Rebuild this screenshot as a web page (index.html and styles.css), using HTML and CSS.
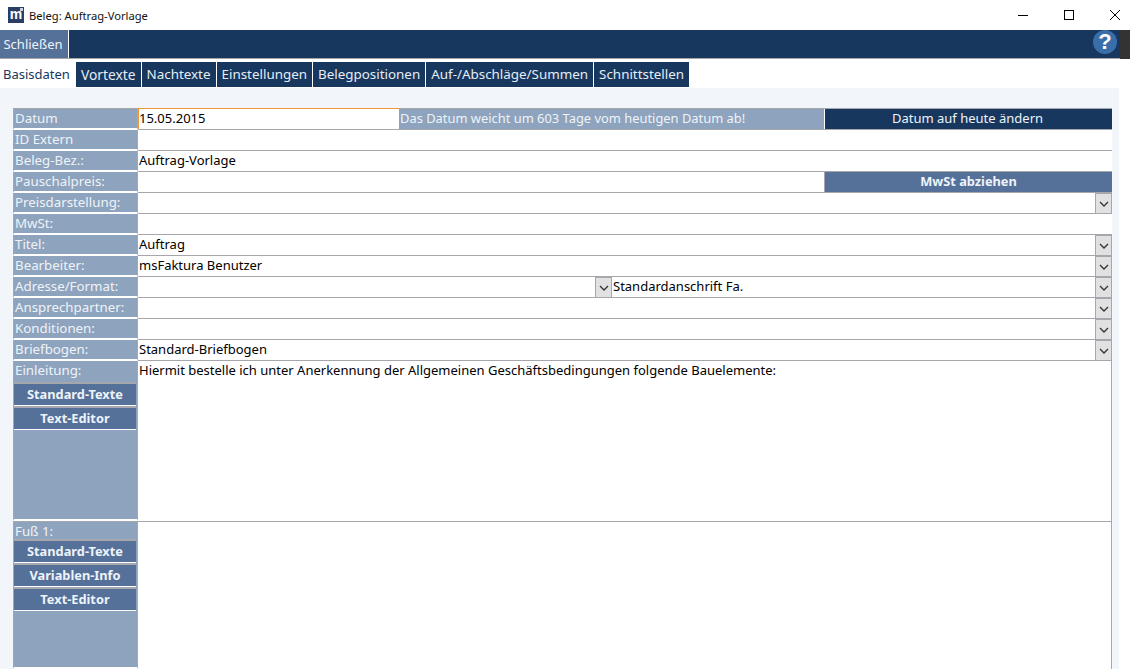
FILE: index.html
```html
<!DOCTYPE html>
<html lang="de">
<head>
  <meta charset="UTF-8" />
  <title>Beleg: Auftrag-Vorlage</title>
  <link rel="stylesheet" href="styles.css">
</head>
<body>
  <div class="titlebar">
    <div class="title">
      <div class="app-icon">m<span class="app-dot"></span></div>
      <span>Beleg: Auftrag-Vorlage</span>
    </div>
    <div class="win-btns">
      <svg width="12" height="12" viewBox="0 0 12 12"><path d="M1 6.5H11" stroke="#000" fill="none"/></svg>
      <svg width="12" height="12" viewBox="0 0 12 12"><rect x="1.5" y="1.5" width="9" height="9" stroke="#000" fill="none"/></svg>
      <svg width="12" height="12" viewBox="0 0 12 12"><path d="M1 1L11 11M11 1L1 11" stroke="#000" fill="none"/></svg>
    </div>
  </div>

  <div class="toolbar">
    <div class="toolbar-main">
      <button class="btn-close">Schließen</button>
      <div class="help">?</div>
    </div>
    <div class="toolbar-end"></div>
  </div>

  <div class="tabs">
    <a class="tab active">Basisdaten</a>
    <a class="tab tab-vortexte">Vortexte</a>
    <a class="tab">Nachtexte</a>
    <a class="tab">Einstellungen</a>
    <a class="tab">Belegpositionen</a>
    <a class="tab">Auf-/Abschläge/Summen</a>
    <a class="tab">Schnittstellen</a>
  </div>

  <div class="panel">
    <div class="form">
      <div class="row row-first">
        <div class="label">Datum</div>
        <div class="field field-date">15.05.2015</div>
        <div class="date-note">Das Datum weicht um 603 Tage vom heutigen Datum ab!</div>
        <button class="btn-today">Datum auf heute ändern</button>
      </div>
      <div class="row">
        <div class="label">ID Extern</div>
        <div class="field"></div>
      </div>
      <div class="row">
        <div class="label">Beleg-Bez.:</div>
        <div class="field">Auftrag-Vorlage</div>
      </div>
      <div class="row">
        <div class="label">Pauschalpreis:</div>
        <div class="field"></div>
        <button class="btn-mwst">MwSt abziehen</button>
      </div>
      <div class="row">
        <div class="label">Preisdarstellung:</div>
        <div class="field"></div>
        <div class="drop"><svg width="10" height="6" viewBox="0 0 10 6"><path d="M1 1L5 5L9 1" stroke="#333" stroke-width="1.3" fill="none"/></svg></div>
      </div>
      <div class="row">
        <div class="label">MwSt:</div>
        <div class="field"></div>
      </div>
      <div class="row">
        <div class="label">Titel:</div>
        <div class="field">Auftrag</div>
        <div class="drop"><svg width="10" height="6" viewBox="0 0 10 6"><path d="M1 1L5 5L9 1" stroke="#333" stroke-width="1.3" fill="none"/></svg></div>
      </div>
      <div class="row">
        <div class="label">Bearbeiter:</div>
        <div class="field">msFaktura Benutzer</div>
        <div class="drop"><svg width="10" height="6" viewBox="0 0 10 6"><path d="M1 1L5 5L9 1" stroke="#333" stroke-width="1.3" fill="none"/></svg></div>
      </div>
      <div class="row">
        <div class="label">Adresse/Format:</div>
        <div class="field field-addr"></div>
        <div class="drop"><svg width="10" height="6" viewBox="0 0 10 6"><path d="M1 1L5 5L9 1" stroke="#333" stroke-width="1.3" fill="none"/></svg></div>
        <div class="field">Standardanschrift Fa.</div>
        <div class="drop"><svg width="10" height="6" viewBox="0 0 10 6"><path d="M1 1L5 5L9 1" stroke="#333" stroke-width="1.3" fill="none"/></svg></div>
      </div>
      <div class="row">
        <div class="label">Ansprechpartner:</div>
        <div class="field"></div>
        <div class="drop"><svg width="10" height="6" viewBox="0 0 10 6"><path d="M1 1L5 5L9 1" stroke="#333" stroke-width="1.3" fill="none"/></svg></div>
      </div>
      <div class="row">
        <div class="label">Konditionen:</div>
        <div class="field"></div>
        <div class="drop"><svg width="10" height="6" viewBox="0 0 10 6"><path d="M1 1L5 5L9 1" stroke="#333" stroke-width="1.3" fill="none"/></svg></div>
      </div>
      <div class="row">
        <div class="label">Briefbogen:</div>
        <div class="field">Standard-Briefbogen</div>
        <div class="drop"><svg width="10" height="6" viewBox="0 0 10 6"><path d="M1 1L5 5L9 1" stroke="#333" stroke-width="1.3" fill="none"/></svg></div>
      </div>

      <div class="row row-text row-intro">
        <div class="label label-text">
          <div class="label-cap">Einleitung:</div>
          <button class="btn-side">Standard-Texte</button>
          <button class="btn-side">Text-Editor</button>
        </div>
        <div class="field field-text">Hiermit bestelle ich unter Anerkennung der Allgemeinen Geschäftsbedingungen folgende Bauelemente:</div>
      </div>
      <div class="row row-text row-foot">
        <div class="label label-text">
          <div class="label-cap">Fuß 1:</div>
          <button class="btn-side">Standard-Texte</button>
          <button class="btn-side">Variablen-Info</button>
          <button class="btn-side">Text-Editor</button>
        </div>
        <div class="field field-text"></div>
      </div>
    </div>
  </div>
</body>
</html>
```

FILE: styles.css
```css
html, body {
  height: 100%;
}
body {
  font-family: 'Noto Sans', 'Open Sans', sans-serif;
  font-size: 13px;
  margin: 0;
  padding: 0;
  background-color: white;
  overflow: hidden;
}
button {
  font-family: inherit;
  font-size: 13px;
  cursor: pointer;
}
.titlebar {
  display: flex;
  justify-content: space-between;
  align-items: center;
  height: 30px;
  background-color: white;
}
.title {
  display: flex;
  align-items: center;
  font-size: 11.2px;
  color: #111;
  padding-left: 8px;
}
.app-icon {
  position: relative;
  width: 16px;
  height: 16px;
  margin-right: 5px;
  background-color: #2b3f66;
  color: white;
  font-family: 'Liberation Sans', sans-serif;
  font-weight: bold;
  font-size: 14px;
  line-height: 15px;
  text-align: center;
}
.app-dot {
  position: absolute;
  top: 1px;
  right: 1px;
  width: 3px;
  height: 3px;
  background-color: #c9d2e0;
}
.win-btns {
  display: flex;
  gap: 34px;
  padding-right: 9px;
}
.toolbar {
  display: flex;
  height: 30px;
}
.toolbar-main {
  flex: 1;
  display: flex;
  justify-content: space-between;
  align-items: flex-start;
  background-color: #17375e;
  border-bottom: 1px solid #a6a6a6;
  height: 28px;
}
.toolbar-end {
  width: 10px;
  height: 29px;
  background-color: #333;
}
.btn-close {
  height: 28px;
  width: 69px;
  padding: 0 2px 0 0;
  border: none;
  border-right: 1px solid white;
  background-color: #557199;
  color: #eef3fa;
}
.help {
  width: 24px;
  height: 24px;
  margin: 0 3px 0 0;
  border-radius: 50%;
  background-color: #3a6ea8;
  color: white;
  font-family: 'Liberation Sans', sans-serif;
  font-weight: bold;
  font-size: 22px;
  line-height: 24px;
  text-align: center;
}
.tabs {
  display: flex;
  height: 26px;
  padding-top: 2px;
}
.tab {
  display: block;
  height: 25px;
  line-height: 25px;
  padding: 0 5px;
  margin-right: 1px;
  background-color: #17375e;
  color: #e6edf6;
  font-size: 13.4px;
}
.tab.active {
  background-color: white;
  color: #17375e;
  font-size: 13px;
  padding: 0 5px 0 3px;
}
.tab-vortexte {
  font-size: 13.8px;
}
.panel {
  width: 1119px;
  height: 581px;
  box-sizing: border-box;
  padding: 20px 7px 0 13px;
  background-color: #f2f5fa;
}
.form {
  display: flex;
  flex-direction: column;
}
.row {
  display: flex;
  height: 21px;
  box-sizing: border-box;
  background-color: white;
  border-bottom: 1px solid #a6a6ad;
  line-height: 19px;
}
.row-first {
  height: 22px;
  border-top: 1px solid #a6a6ad;
}
.label {
  width: 125px;
  flex: none;
  box-sizing: border-box;
  padding-left: 1px;
  background-color: #8ea3bd;
  color: #eef3f9;
  font-size: 13.3px;
  border-right: 1px solid #a6a6ad;
  border-left: 1px solid #a6a6ad;
  margin-bottom: -1px;
  border-bottom: 2px solid white;
}
.field {
  flex: 1;
  padding-left: 1px;
  color: #000;
  white-space: nowrap;
}
.field-date {
  flex: none;
  width: 261px;
  margin-top: -1px;
  padding-left: 0;
  border-top: 1px solid #f0963c;
  border-left: 1px solid #f0963c;
  box-sizing: border-box;
}
.date-note {
  flex: none;
  width: 425px;
  padding-left: 1px;
  box-sizing: border-box;
  background-color: #8ea3bd;
  color: #eef3f9;
  font-size: 12.9px;
}
.btn-today {
  flex: 1;
  padding: 0 2px 2px 0;
  border: none;
  border-left: 1px solid white;
  background-color: #17375e;
  color: #eef3fa;
}
.btn-mwst {
  flex: none;
  width: 288px;
  padding: 0 0 2px;
  border: none;
  border-left: 1px solid #a6a6ad;
  background-color: #557199;
  color: #eef3fa;
  font-size: 12.8px;
  font-weight: bold;
}
.field-addr {
  flex: none;
  width: 457px;
  box-sizing: border-box;
}
.drop {
  flex: none;
  display: flex;
  align-items: center;
  justify-content: center;
  width: 17px;
  box-sizing: border-box;
  background-color: #e1e1e1;
  border-left: 1px solid #a6a6ad;
  border-right: 1px solid #a6a6ad;
  border-top: 1px solid #a6a6ad;
}
.row-text {
  flex: none;
}
.row-intro {
  height: 161px;
}
.row-foot {
  height: 147px;
  border-bottom: none;
}
.label-text {
  display: flex;
  flex-direction: column;
  margin-bottom: 0;
  border-bottom: 2px solid white;
}
.label-cap {
  height: 21px;
  flex: none;
}
.row-foot .label-cap {
  height: 17px;
}
.btn-side {
  flex: none;
  height: 24px;
  margin: 0 0 0 -1px;
  padding: 0 0 2px;
  border: none;
  border-top: 2px solid #a6a6ad;
  border-bottom: 1px solid white;
  width: 122px;
  background-color: #557199;
  color: #eef3fa;
  font-size: 12.8px;
  font-weight: bold;
}
.field-text {
  border-right: 1px solid #a6a6ad;
}
```
